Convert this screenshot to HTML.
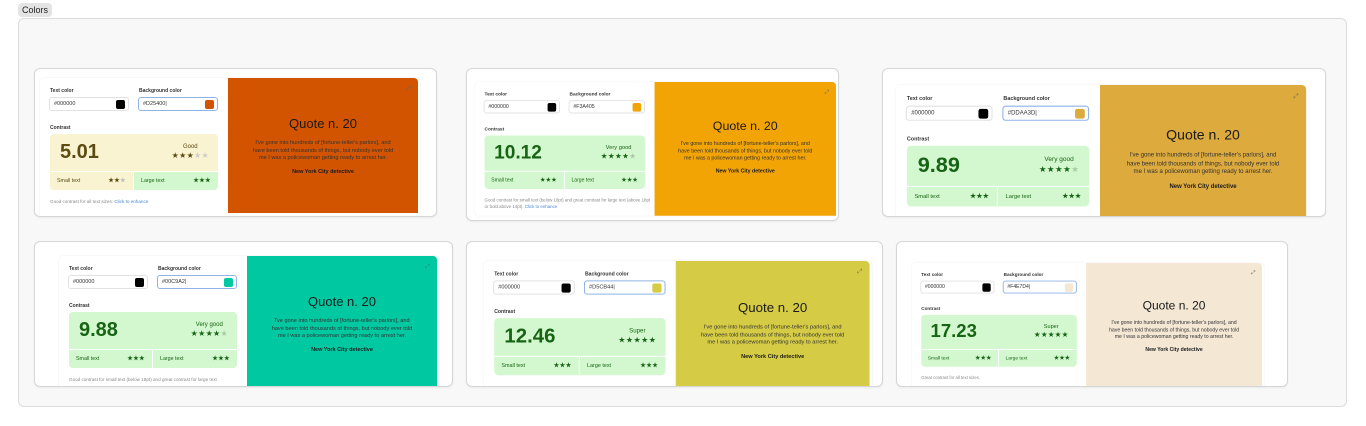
<!DOCTYPE html>
<html><head><meta charset="utf-8"><style>
*{box-sizing:border-box;margin:0;padding:0}
body{width:1366px;height:426px;background:#fff;font-family:"Liberation Sans",sans-serif;position:relative;overflow:hidden}
.tag{position:absolute;left:18px;top:3px;width:34px;height:14px;background:#e4e4e4;border-radius:4px;font-size:9px;line-height:14px;text-align:center;color:#222}
.main{position:absolute;left:18px;top:18px;width:1329px;height:389px;background:#f8f8f8;border:1px solid #dcdcdc;border-radius:6px}
.card{position:absolute;background:#fff;border:1px solid #d6d6d6;border-radius:6px;overflow:hidden;box-shadow:0 1px 2px rgba(0,0,0,.06)}
.w{position:absolute;width:380px;height:140px;transform-origin:0 0;background:#fff;border-radius:4px;box-shadow:0 0 2px rgba(0,0,0,.08)}
.lbl{position:absolute;font-size:5px;font-weight:bold;color:#333}
.inp{position:absolute;top:19px;width:80px;height:14px;border:1px solid #e2e2e2;border-radius:3px;font-size:5.5px;line-height:12px;padding-left:4px;color:#333}
.inp.f{border-color:#8fb3e6}
.sw{position:absolute;right:3px;top:2px;width:9px;height:9px;border-radius:2px}
.cb{position:absolute;left:10px;top:56px;width:168px;height:56px;border-radius:4px;background:#d3f8cf;color:#176414;overflow:hidden}
.num{position:absolute;left:10px;top:7px;font-size:20px;font-weight:bold}
.rt{position:absolute;right:9px;top:10px;font-size:6px;text-align:center}
.st{font-size:8px;letter-spacing:.3px;margin-top:1px}
.row{position:absolute;top:37px;height:19px;width:84px;font-size:5.3px;line-height:19px;padding:0 7px;border-top:1px solid #fff}
.row b{float:right;font-size:6px;letter-spacing:.5px}
.r1{left:0;border-right:1px solid #fff}.r2{left:84px}
.ft{position:absolute;left:10px;top:120px;width:175px;font-size:4.6px;color:#888;line-height:7px}
.ft a{color:#4a86d6}
.cp{position:absolute;left:188px;top:0;width:190px;height:140px;border-radius:0 4px 0 0;text-align:center;color:#1a1a1a}
.q{position:absolute;top:38px;width:100%;font-size:13px}
.body{position:absolute;top:62px;left:22px;width:146px;font-size:5.6px;line-height:7.5px;color:#333}
.au{position:absolute;top:91px;width:100%;font-size:5.5px;font-weight:bold}
.ex{position:absolute;right:7px;top:8px;font-size:6px;color:#666}
</style></head><body>
<div class="tag">Colors</div>
<div class="main"></div>

<div class="card" style="left:34px;top:68px;width:403px;height:149px">
<div class="w" style="left:5px;top:9px;transform:scale(1)">
<div class="lbl" style="left:10px;top:10px">Text color</div><div class="lbl" style="left:99px;top:10px">Background color</div>
<div class="inp" style="left:9px">#000000<div class="sw" style="background:#000"></div></div>
<div class="inp f" style="left:98px">#D25400|<div class="sw" style="background:#D25400"></div></div>
<div class="lbl" style="left:10px;top:47px">Contrast</div>
<div class="cb" style="background:#faf3d1;color:#5c4b12"><div class="num">5.01</div><div class="rt">Good<div class="st">★★★<span style="color:#ccc">★★</span></div></div>
<div class="row r1">Small text<b>★★<span style="color:#bbb">★</span></b></div><div class="row r2" style="background:#d3f8cf;color:#176414">Large text<b>★★★</b></div></div>
<div class="ft">Good contrast for all text sizes. <a>Click to enhance</a></div>
<div class="cp" style="background:#D25400;height:135px"><div class="ex">⤢</div><div class="q">Quote n. 20</div><div class="body">I've gone into hundreds of [fortune-teller's parlors], and have been told thousands of things, but nobody ever told me I was a policewoman getting ready to arrest her.</div><div class="au">New York City detective</div></div>
</div></div>

<div class="card" style="left:466px;top:68px;width:373px;height:153px">
<div class="w" style="left:8px;top:13px;transform:scale(.955)">
<div class="lbl" style="left:10px;top:10px">Text color</div><div class="lbl" style="left:99px;top:10px">Background color</div>
<div class="inp" style="left:9px">#000000<div class="sw" style="background:#000"></div></div>
<div class="inp" style="left:98px">#F3A405<div class="sw" style="background:#F3A405"></div></div>
<div class="lbl" style="left:10px;top:47px">Contrast</div>
<div class="cb"><div class="num">10.12</div><div class="rt">Very good<div class="st">★★★★<span style="color:#aac9a6">★</span></div></div>
<div class="row r1">Small text<b>★★★</b></div><div class="row r2">Large text<b>★★★</b></div></div>
<div class="ft">Good contrast for small text (below 18pt) and great contrast for large text (above 18pt or bold above 14pt). <a>Click to enhance</a></div>
<div class="cp" style="background:#F3A405;width:190px"><div class="ex">⤢</div><div class="q">Quote n. 20</div><div class="body">I've gone into hundreds of [fortune-teller's parlors], and have been told thousands of things, but nobody ever told me I was a policewoman getting ready to arrest her.</div><div class="au">New York City detective</div></div>
</div></div>

<div class="card" style="left:882px;top:68px;width:444px;height:149px">
<div class="w" style="left:13px;top:16px;transform:scale(1.085)">
<div class="lbl" style="left:10px;top:10px">Text color</div><div class="lbl" style="left:99px;top:10px">Background color</div>
<div class="inp" style="left:9px">#000000<div class="sw" style="background:#000"></div></div>
<div class="inp f" style="left:98px">#DDAA3D|<div class="sw" style="background:#DDAA3D"></div></div>
<div class="lbl" style="left:10px;top:47px">Contrast</div>
<div class="cb"><div class="num">9.89</div><div class="rt">Very good<div class="st">★★★★<span style="color:#aac9a6">★</span></div></div>
<div class="row r1">Small text<b>★★★</b></div><div class="row r2">Large text<b>★★★</b></div></div>
<div class="cp" style="background:#DDAA3D"><div class="ex">⤢</div><div class="q">Quote n. 20</div><div class="body">I've gone into hundreds of [fortune-teller's parlors], and have been told thousands of things, but nobody ever told me I was a policewoman getting ready to arrest her.</div><div class="au">New York City detective</div></div>
</div></div>

<div class="card" style="left:34px;top:241px;width:419px;height:146px">
<div class="w" style="left:24px;top:14px;transform:scale(1)">
<div class="lbl" style="left:10px;top:10px">Text color</div><div class="lbl" style="left:99px;top:10px">Background color</div>
<div class="inp" style="left:9px">#000000<div class="sw" style="background:#000"></div></div>
<div class="inp f" style="left:98px">#00C9A2|<div class="sw" style="background:#00C9A2"></div></div>
<div class="lbl" style="left:10px;top:47px">Contrast</div>
<div class="cb"><div class="num">9.88</div><div class="rt">Very good<div class="st">★★★★<span style="color:#aac9a6">★</span></div></div>
<div class="row r1">Small text<b>★★★</b></div><div class="row r2">Large text<b>★★★</b></div></div>
<div class="ft">Good contrast for small text (below 18pt) and great contrast for large text</div>
<div class="cp" style="background:#00C9A2"><div class="ex">⤢</div><div class="q">Quote n. 20</div><div class="body">I've gone into hundreds of [fortune-teller's parlors], and have been told thousands of things, but nobody ever told me I was a policewoman getting ready to arrest her.</div><div class="au">New York City detective</div></div>
</div></div>

<div class="card" style="left:466px;top:241px;width:417px;height:146px">
<div class="w" style="left:17px;top:19px;transform:scale(1.02)">
<div class="lbl" style="left:10px;top:10px">Text color</div><div class="lbl" style="left:99px;top:10px">Background color</div>
<div class="inp" style="left:9px">#000000<div class="sw" style="background:#000"></div></div>
<div class="inp f" style="left:98px">#D5CB44|<div class="sw" style="background:#D5CB44"></div></div>
<div class="lbl" style="left:10px;top:47px">Contrast</div>
<div class="cb"><div class="num">12.46</div><div class="rt">Super<div class="st">★★★★★</div></div>
<div class="row r1">Small text<b>★★★</b></div><div class="row r2">Large text<b>★★★</b></div></div>
<div class="cp" style="background:#D5CB44"><div class="ex">⤢</div><div class="q">Quote n. 20</div><div class="body">I've gone into hundreds of [fortune-teller's parlors], and have been told thousands of things, but nobody ever told me I was a policewoman getting ready to arrest her.</div><div class="au">New York City detective</div></div>
</div></div>

<div class="card" style="left:896px;top:241px;width:392px;height:146px">
<div class="w" style="left:15px;top:21px;transform:scale(.926)">
<div class="lbl" style="left:10px;top:10px">Text color</div><div class="lbl" style="left:99px;top:10px">Background color</div>
<div class="inp" style="left:9px">#000000<div class="sw" style="background:#000"></div></div>
<div class="inp f" style="left:98px">#F4E7D4|<div class="sw" style="background:#F4E7D4"></div></div>
<div class="lbl" style="left:10px;top:47px">Contrast</div>
<div class="cb"><div class="num">17.23</div><div class="rt">Super<div class="st">★★★★★</div></div>
<div class="row r1">Small text<b>★★★</b></div><div class="row r2">Large text<b>★★★</b></div></div>
<div class="ft">Great contrast for all text sizes.</div>
<div class="cp" style="background:#F4E7D4"><div class="ex">⤢</div><div class="q">Quote n. 20</div><div class="body">I've gone into hundreds of [fortune-teller's parlors], and have been told thousands of things, but nobody ever told me I was a policewoman getting ready to arrest her.</div><div class="au">New York City detective</div></div>
</div></div>
</body></html>
